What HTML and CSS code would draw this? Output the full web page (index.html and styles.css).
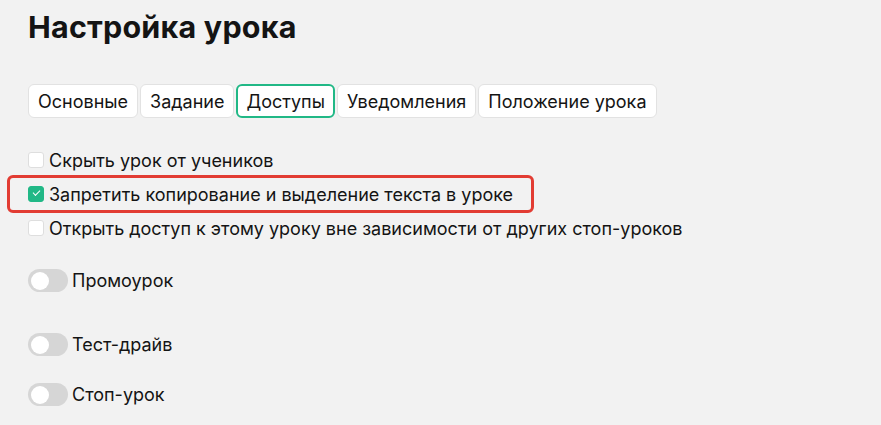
FILE: index.html
```html
<!DOCTYPE html>
<html lang="ru">
<head>
  <meta charset="UTF-8" />
  <meta name="viewport" content="width=device-width, initial-scale=1" />
  <title>Настройка урока</title>
  <link rel="stylesheet" href="styles.css">
</head>
<body>
  <div class="container">
    <h1>Настройка урока</h1>

    <div class="tabs">
      <button class="tab">Основные</button>
      <button class="tab">Задание</button>
      <button class="tab active">Доступы</button>
      <button class="tab">Уведомления</button>
      <button class="tab">Положение урока</button>
    </div>

    <div class="access-list">
      <label class="check-row">
        <input type="checkbox" />
        <span class="box"></span>
        Скрыть урок от учеников
      </label>
      <label class="check-row marked">
        <input type="checkbox" checked />
        <span class="box"></span>
        Запретить копирование и выделение текста в уроке
      </label>
      <label class="check-row">
        <input type="checkbox" />
        <span class="box"></span>
        Открыть доступ к этому уроку вне зависимости от других стоп-уроков
      </label>
    </div>

    <div class="switch-row promo">
      <span class="switch"></span>
      Промоурок
    </div>
    <div class="switch-row test-drive">
      <span class="switch"></span>
      Тест-драйв
    </div>
    <div class="switch-row stop">
      <span class="switch"></span>
      Стоп-урок
    </div>
  </div>
</body>
</html>
```

FILE: styles.css
```css
body {
  margin: 0;
  background: #f2f2f2;
  color: #141414;
  font-family: Inter, "Noto Sans", sans-serif;
}

.container {
  padding: 8px 28px;
}

h1 {
  font-size: 30.5px;
  font-weight: 700;
  margin: 0;
  line-height: 38px;
  letter-spacing: 0.2px;
}

.tabs {
  display: flex;
  gap: 2px;
  margin-top: 38px;
}

.tab {
  height: 34px;
  padding: 0 9px;
  background: #fff;
  border: 1px solid #e2e2e2;
  border-radius: 6px;
  font-family: inherit;
  font-size: 18px;
  color: #141414;
  cursor: pointer;
}

.tab.active {
  border: 2px solid #21b886;
  padding: 0 8px;
}

.access-list {
  margin-top: 25px;
}

.check-row {
  position: relative;
  display: flex;
  align-items: center;
  gap: 5px;
  height: 34px;
  font-size: 18px;
}

.check-row input {
  display: none;
}

.check-row .box {
  width: 16px;
  height: 16px;
  box-sizing: border-box;
  background: #fff;
  border: 1px solid #dedede;
  border-radius: 3px;
}

.check-row input:checked + .box {
  background: #21b886;
  border-color: #21b886;
  position: relative;
}

.check-row input:checked + .box::after {
  content: "";
  position: absolute;
  left: 4px;
  top: 3px;
  width: 6px;
  height: 3px;
  border-left: 1.5px solid #fff;
  border-bottom: 1.5px solid #fff;
  transform: rotate(-45deg);
}

/* red frame around the highlighted option */
.check-row.marked::after {
  content: "";
  position: absolute;
  left: -21px;
  top: -2px;
  width: 527px;
  height: 38px;
  box-sizing: border-box;
  border: 3px solid #e23c33;
  border-radius: 6px;
}

.switch-row {
  display: flex;
  align-items: center;
  gap: 4px;
  font-size: 18px;
}

.switch-row.promo {
  margin-top: 24px;
}

.switch-row.test-drive {
  margin-top: 41px;
}

.switch-row.stop {
  margin-top: 27px;
}

.switch {
  position: relative;
  width: 40px;
  height: 23px;
  border-radius: 12px;
  background: #d6d6d6;
}

.switch::after {
  content: "";
  position: absolute;
  left: 3px;
  top: 2.5px;
  width: 18px;
  height: 18px;
  border-radius: 50%;
  background: #fff;
}
```
